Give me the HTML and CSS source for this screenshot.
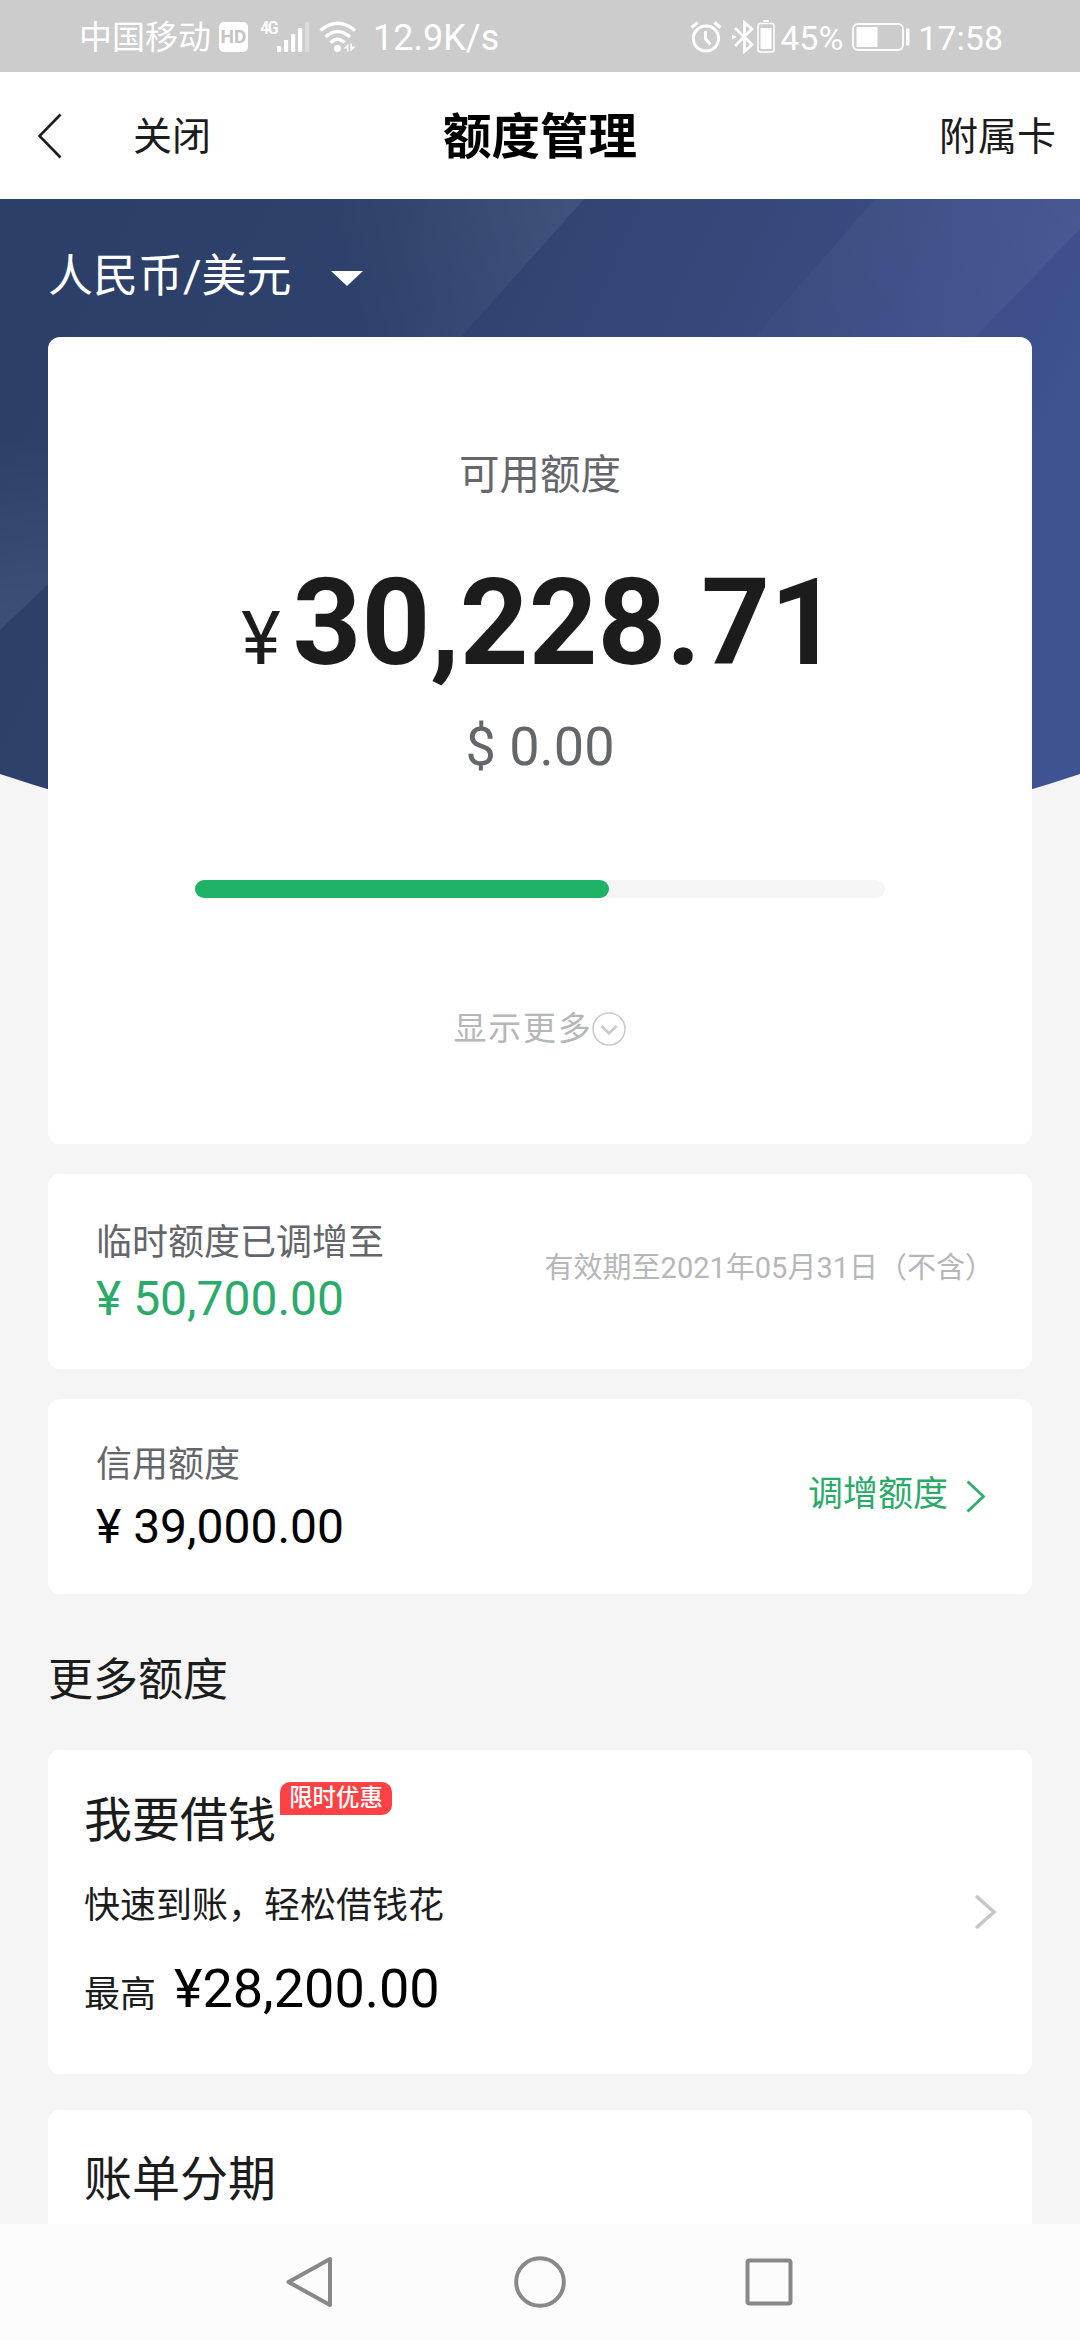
FILE: index.html
```html
<!DOCTYPE html>
<html lang="zh-CN">
<head>
<meta charset="utf-8">
<title>额度管理</title>
<link rel="stylesheet" href="styles.css">
</head>
<body>
<div class="screen">
  <header class="status">
    <span class="carrier">中国移动</span>
    <span class="hd">HD</span>
    <span class="net">4G</span>
    <svg class="signal" width="33" height="30" viewBox="0 0 33 30" fill="#fff"><rect x="0" y="24" width="4.2" height="6" rx="1"/><rect x="7" y="18" width="4.2" height="12" rx="1"/><rect x="14" y="12" width="4.2" height="18" rx="1"/><rect x="21" y="6" width="4.2" height="24" rx="1"/><rect x="28" y="0" width="4.2" height="30" rx="1" opacity=".3"/></svg>
    <svg class="wifi" width="38" height="32" viewBox="0 0 38 32" fill="none" stroke="#fff" stroke-width="3.4"><path d="M1.500 9.500Q18.500-5 36 9.500M6.500 16Q18.500 5 31 16M11.500 21.500Q18.500 15 25.500 21.500"/><circle cx="18.500" cy="27.500" r="3.500" fill="#fff" stroke="none"/><path d="M24.500 27.500l5-5v8h-1.500v-3zM31.500 22.500v8l5-5h-3.500v-3z" fill="#fff" stroke="none"/></svg>
    <span class="rate">12.9K/s</span>
    <span class="grow"></span>
    <svg class="alarm" width="32" height="32" viewBox="0 0 32 32" fill="none" stroke="#fff" stroke-width="3"><circle cx="16" cy="17.500" r="12.600"/><path d="M15.500 10v8l5 5.500M1.500 6.500L7.500 1.500M24.500 1.500l6 5"/></svg>
    <svg class="bt" width="23" height="34" viewBox="0 0 23 34" fill="none" stroke="#fff" stroke-width="2.800"><path d="M3 8l17 16.500-7.500 7V2.500L20 9 3 26"/><path d="M0 14.500l4.500 2.500L0 19.500z" fill="#fff" stroke="none"/></svg>
    <svg class="cell" width="18" height="33" viewBox="0 0 18 33" fill="none" stroke="#fff" stroke-width="1.500"><rect x="1" y="3.500" width="16" height="28.500" rx="2.500"/><rect x="3.500" y="8" width="11" height="21" fill="#fff" stroke="none"/><path d="M6 1h6" stroke-width="2"/></svg>
    <span class="pct">45%</span>
    <svg class="battery" width="58" height="28" viewBox="0 0 58 28" fill="none" stroke="#fff" stroke-width="1.800"><rect x="1" y="1" width="50" height="26" rx="5"/><rect x="4.500" y="4" width="21" height="20" fill="#fff" stroke="none"/><rect x="54" y="5.500" width="3.500" height="17" rx="1" fill="#fff" stroke="none"/></svg>
    <span class="clock">17:58</span>
  </header>
  <nav class="titlebar">
    <div class="side">
      <svg width="24" height="46" viewBox="0 0 24 46" fill="none" stroke="#1c1c1c" stroke-width="2.600"><path d="M22.500 1.500L1.500 23l21 21.500"/></svg>
      <span class="close">关闭</span>
    </div>
    <h1>额度管理</h1>
    <div class="side end">附属卡</div>
  </nav>
  <main class="body">
    <svg class="backdrop" width="1080" height="640" viewBox="0 0 1080 640">
      <defs>
        <linearGradient id="base" x1="0" y1="0" x2="1" y2=".3"><stop offset="0" stop-color="#2b3f68"/><stop offset=".35" stop-color="#2d416c"/><stop offset=".6" stop-color="#344777"/><stop offset="1" stop-color="#3f5292"/></linearGradient>
        <linearGradient id="beam" gradientUnits="userSpaceOnUse" x1="340" y1="60" x2="570" y2="0"><stop offset="0" stop-color="#fff" stop-opacity="0"/><stop offset="1" stop-color="#fff" stop-opacity=".07"/></linearGradient>
        <linearGradient id="beam2" gradientUnits="userSpaceOnUse" x1="1060" y1="0" x2="800" y2="180"><stop offset="0" stop-color="#fff" stop-opacity=".05"/><stop offset="1" stop-color="#fff" stop-opacity=".015"/></linearGradient>
        <linearGradient id="beam3" gradientUnits="userSpaceOnUse" x1="0" y1="240" x2="30" y2="420"><stop offset="0" stop-color="#fff" stop-opacity="0"/><stop offset="1" stop-color="#fff" stop-opacity=".08"/></linearGradient>
      </defs>
      <path d="M0 0H1080V575Q540 755 0 575Z" fill="url(#base)"/>
      <path d="M330 0H584L461 138H200Z" fill="url(#beam)"/>
      <path d="M875 0H1080V30L975 138H755Z" fill="url(#beam2)"/>
      <path d="M0 240H90V345L0 431Z" fill="url(#beam3)"/>
    </svg>
    <div class="currency">人民币/美元<i class="caret"></i></div>
    <section class="card summary">
      <p class="label">可用额度</p>
      <p class="total"><span class="yen">¥</span>30,228.71</p>
      <p class="usd">$ 0.00</p>
      <div class="track"><div class="fill" style="width:60%"></div></div>
      <div class="more">显示更多<svg width="34" height="34" viewBox="0 0 34 34" fill="none" stroke="#c9cbcd"><circle cx="17" cy="17" r="16" stroke-width="1.600"/><path d="M9.500 14l7.500 7.500 7.500-7.500" stroke-width="2.600"/></svg></div>
    </section>
    <section class="card limit">
      <div><p class="name">临时额度已调增至</p><p class="amount green">¥ 50,700.00</p></div>
      <p class="expiry">有效期至2021年05月31日（不含）</p>
    </section>
    <section class="card limit credit">
      <div><p class="name">信用额度</p><p class="amount">¥ 39,000.00</p></div>
      <p class="raise">调增额度<svg width="20" height="33" viewBox="0 0 20 33" fill="none" stroke="#2fae70" stroke-width="2.800"><path d="M1.500 1.500L17.500 16.500l-16 15"/></svg></p>
    </section>
    <h2>更多额度</h2>
    <section class="card offer">
      <div>
        <h3>我要借钱<span class="tag">限时优惠</span></h3>
        <p class="desc">快速到账，轻松借钱花</p>
        <p class="max">最高<span>¥28,200.00</span></p>
      </div>
      <svg width="23" height="36" viewBox="0 0 23 36" fill="none" stroke="#c4c7ca" stroke-width="3.500"><path d="M2 2l18 16L2 34"/></svg>
    </section>
    <section class="card bill"><h3>账单分期</h3></section>
  </main>
  <footer class="keys">
    <svg width="52" height="52" viewBox="0 0 52 52"><path d="M45 3V49L3.500 26Z"/></svg>
    <svg width="52" height="52" viewBox="0 0 52 52"><circle cx="26" cy="26" r="23.800"/></svg>
    <svg width="52" height="52" viewBox="0 0 52 52"><rect x="4.500" y="4.500" width="43" height="43" rx="2"/></svg>
  </footer>
</div>
</body>
</html>
```
FILE: styles.css
```css
* { box-sizing: border-box; margin: 0; padding: 0; }
body { background: #f5f5f5; font-family: Roboto, "Noto Sans CJK SC", sans-serif; color: #1c1c1c; }
svg { display: block; flex: none; }
.screen { width: 1080px; height: 2340px; display: flex; flex-direction: column; overflow: hidden; }

.status { height: 72px; flex: none; display: flex; align-items: center; background: #ccc; color: #fff; padding: 1px 77px 0 79px; font-size: 34px; line-height: 38px; white-space: nowrap; }
.carrier { font-size: 33px; width: 133px; padding-top: 2px; }
.hd { width: 29px; height: 30px; margin-left: 7px; border-radius: 5px; background: #fff; color: #c4c4c4; font: 700 19px/30px Roboto, sans-serif; text-align: center; }
.net { align-self: flex-start; margin: 17px 0 0 12px; font: 500 19px/20px "Roboto Condensed", Roboto, sans-serif; width: 17px; letter-spacing: -2px; }
.signal { margin-right: 9px; }
.rate { font-size: 36px; margin-left: 16px; padding-top: 2px; }
.grow { flex: 1; }
.bt { margin-left: 10px; }
.cell { margin-left: 2px; }
.pct { margin-left: 5px; padding-top: 2px; }
.battery { margin: 0 8px 0 9px; }
.clock { padding-top: 2px; }

.titlebar { height: 127px; flex: none; display: flex; align-items: center; justify-content: space-between; background: #fff; padding: 0 24px 0 38px; font-size: 39px; line-height: 56px; }
.side { width: 300px; display: flex; align-items: center; }
.close { margin-left: 71px; padding-top: 3px; }
.end { width: 314px; justify-content: flex-end; padding-top: 3px; }
h1 { font-size: 48.5px; line-height: 60px; padding-top: 5px; font-weight: 700; color: #000; }

.body { position: relative; z-index: 0; flex: 1; min-height: 0; overflow: hidden; padding: 0 48px; }
.backdrop { position: absolute; left: 0; top: 0; z-index: -1; }
.currency { height: 138px; padding-top: 46px; display: flex; align-items: flex-start; color: #fff; font-size: 45px; line-height: 64px; }
.caret { margin: 26px 0 0 39px; border: 16px solid transparent; border-top: 15px solid #fff; border-bottom: 0; }
.card { background: #fff; border-radius: 12px; }
.summary { height: 807px; padding-top: 108px; display: flex; flex-direction: column; align-items: center; }
.label { font-size: 40.5px; line-height: 60px; color: #63666a; }
.total { display: flex; align-items: baseline; height: 140px; margin-top: 48px; font-size: 120px; line-height: 140px; font-weight: 700; }
.yen { font-size: 75px; font-weight: 400; margin-right: 12px; }
.usd { margin-top: 22px; font-size: 54px; line-height: 64px; color: #63666a; }
.track { width: 690px; height: 18px; margin-top: 101px; border-radius: 9px; background: #f5f5f5; }
.fill { height: 18px; border-radius: 9px; background: #1eb264; }
.more { margin-top: 108px; display: flex; align-items: center; font-size: 33px; line-height: 46px; letter-spacing: 1.7px; color: #b5b7b9; }
.limit { height: 195px; margin-top: 30px; padding: 42px 38px 0 48px; display: flex; justify-content: space-between; }
.name { font-size: 36px; line-height: 54px; color: #63666a; }
.amount { font-size: 48px; line-height: 58px; color: #000; }
.amount.green, .raise { color: #2bab6a; }
.credit { padding: 39px 46px 0 48px; }
.credit .amount { margin-top: 6px; }
.expiry { font-size: 29px; line-height: 40px; margin-top: 32px; color: #b5b7b9; }
.raise { height: 50px; margin-top: 32px; font-size: 35px; line-height: 50px; display: flex; align-items: center; }
.raise svg { margin: 2px 0 0 18px; }
h2 { font-size: 45px; line-height: 64px; font-weight: 400; margin: 55px 0 37px; }
.offer { height: 324px; display: flex; align-items: flex-start; justify-content: space-between; padding: 39px 35px 0 36px; }
.offer > svg { margin-top: 105px; }
h3 { display: flex; font-size: 48px; line-height: 64px; font-weight: 400; }
.tag { width: 112px; height: 33px; margin: -7px 0 0 4px; border-radius: 10px 10px 10px 0; background: #fd4245; color: #fff; font-size: 23.4px; line-height: 32px; font-weight: 500; text-align: center; }
.desc { font-size: 36px; line-height: 54px; margin-top: 26px; }
.max { display: flex; align-items: baseline; font-size: 36px; line-height: 64px; margin-top: 24px; }
.max span { font-size: 54px; margin-left: 18px; color: #000; }
.bill { height: 324px; margin-top: 36px; padding: 38px 36px; }

.keys { height: 116px; flex: none; background: #fcfcfc; display: flex; justify-content: center; align-items: center; gap: 177px; }
.keys svg { fill: none; stroke: #888; stroke-width: 4; stroke-linejoin: round; }
```
